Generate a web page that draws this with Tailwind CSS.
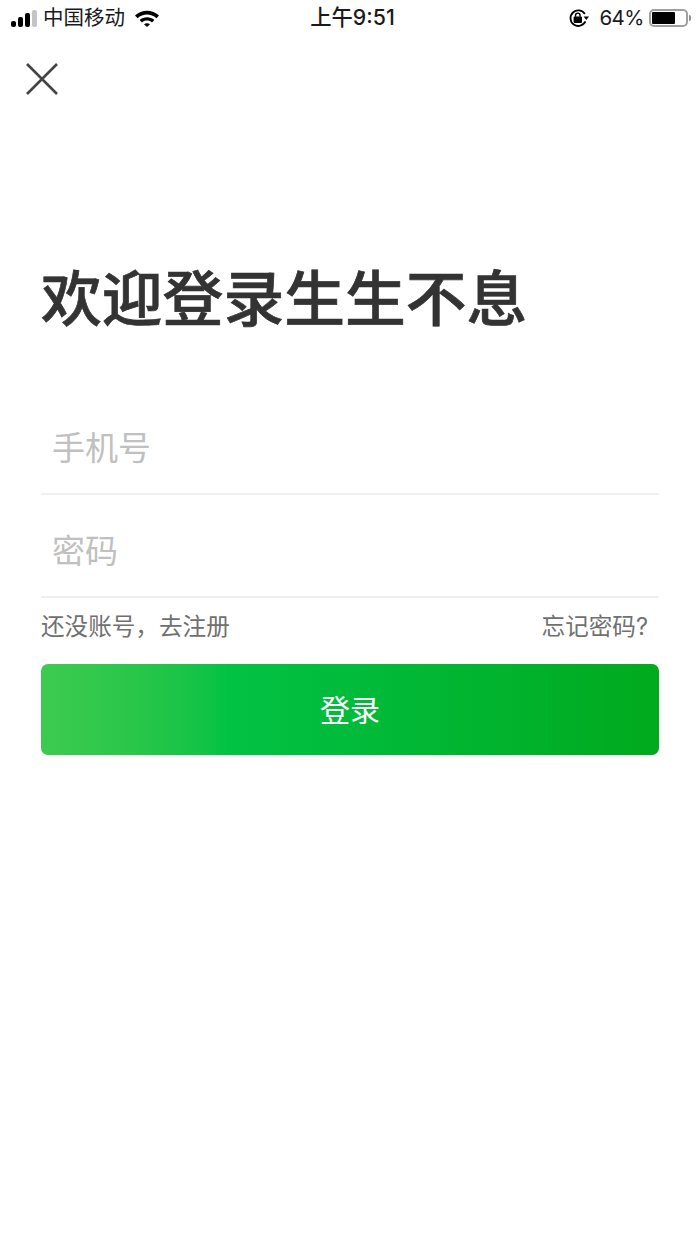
<!DOCTYPE html>
<html lang="zh-CN">
<head>
    <meta charset="UTF-8">
    <meta name="viewport" content="width=device-width, initial-scale=1.0">
    <title>登录</title>
    <script src="https://cdn.jsdelivr.net/npm/@tailwindcss/browser@4"></script>
</head>
<body class="bg-white h-[1244px] w-[700px] overflow-hidden font-['Inter','Noto_Sans_CJK_SC',sans-serif]">
    <!-- Status bar -->
    <div class="h-[36px] flex items-center justify-between text-[20.5px] text-[#1a1a1a] leading-none">
        <div class="flex items-center w-[240px] pl-[11px]">
            <div class="flex items-end gap-[2px] h-[17px]">
                <span class="w-[5px] h-[6px] rounded-[2px] bg-black"></span>
                <span class="w-[5px] h-[10px] rounded-[2px] bg-black"></span>
                <span class="w-[5px] h-[14px] rounded-[2px] bg-black"></span>
                <span class="w-[5px] h-[17px] rounded-[2px] bg-[#c4c4c4]"></span>
            </div>
            <span class="ml-[6px]">中国移动</span>
            <svg class="ml-[10px]" width="24" height="18" viewBox="0 0 24 18">
                <path d="M0 6.5 C6.5 0 17.5 0 24 6.5 L21.4 9.2 C16 4.4 8 4.4 2.6 9.2 Z" fill="#000"/>
                <path d="M4.6 11 C8.6 7.4 15.4 7.4 19.4 11 L17 13.4 C14.2 11 9.8 11 7 13.4 Z" fill="#000"/>
                <path d="M9 15.2 C10.8 13.8 13.2 13.8 15 15.2 L12 18 Z" fill="#000"/>
            </svg>
        </div>
        <span class="font-medium text-[21.3px] ml-[5px]">上午9:51</span>
        <div class="flex items-center justify-end w-[240px] pr-[9px]">
            <svg width="20" height="20" viewBox="0 0 20 20" fill="none">
                <path d="M15.9 6 A7.8 7.8 0 1 0 16.4 13.4" stroke="#000" stroke-width="1.8"/>
                <path d="M14.6 8.4 L20 8.4 L17.3 12 Z" fill="#000"/>
                <rect x="4.6" y="8.6" width="8.4" height="6.4" rx="1" fill="#000"/>
                <path d="M6.5 8.8 V7.4 A2.3 2.3 0 0 1 11.1 7.4 V8.8" stroke="#000" stroke-width="1.4"/>
            </svg>
            <span class="ml-[10px] mr-[5px] tracking-[-0.5px]">64%</span>
            <div class="w-[39px] h-[18px] rounded-[5px] border-2 border-[#a0a0a0] p-[1px]">
                <div class="h-full w-[23px] bg-black rounded-[1px]"></div>
            </div>
            <span class="ml-[1px] w-[2px] h-[6px] rounded-r-full bg-[#8e8e8e]"></span>
        </div>
    </div>

    <!-- Close -->
    <div class="pl-[26px] pt-[27px]">
        <svg class="block" width="32" height="32" viewBox="0 0 32 32">
            <path d="M1 1 L31 31 M31 1 L1 31" stroke="#444" stroke-width="2.6"/>
        </svg>
    </div>

    <main class="px-[41px]">
        <h1 class="mt-[164px] text-[60.8px] leading-[80px] font-medium text-[#333] [-webkit-text-stroke:0.7px_#333]">欢迎登录生生不息</h1>

        <div class="mt-[66px] h-[90px] flex items-center px-[11px] border-b-2 border-[#f0f0f0] text-[33px] text-[#c0c0c0]">手机号</div>
        <div class="mt-[13px] h-[90px] flex items-center px-[11px] border-b-2 border-[#f0f0f0] text-[33px] text-[#c0c0c0]">密码</div>

        <div class="mt-[12px] flex justify-between text-[23.6px] leading-[34px] text-[#707070]">
            <span>还没账号，去注册</span>
            <span class="pr-[11px]">忘记密码?</span>
        </div>

        <button class="mt-[20px] w-full h-[91px] pt-[2px] rounded-[7px] bg-gradient-to-r from-[#3ccb50] via-[#02c244] via-[30%] to-[#00aa1c] text-white text-[30px]">登录</button>
    </main>
</body>
</html>
